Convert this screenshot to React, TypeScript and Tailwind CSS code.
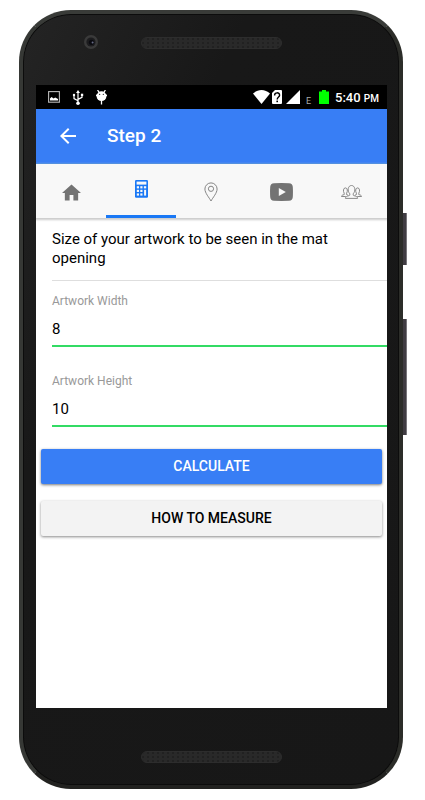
import { useState } from "react";

type IconProps = { className?: string };

const StatusIcons: React.FC = () => (
  <>
    <div className="flex items-center gap-3">
      <svg viewBox="0 0 12 12" className="h-3 w-3" aria-hidden="true">
        <rect x="0.6" y="0.6" width="10.8" height="10.6" fill="none" stroke="#b8b8b8" strokeWidth="1.1" />
        <path d="M2 9.6V7.6L3.6 6l2 1.6 1.6-1L10 8v1.6z" fill="#fff" />
      </svg>
      <svg viewBox="0 0 12 15" className="h-[15px] w-3" aria-hidden="true">
        <path d="M6 2.5V13M6 10.8L2 8.6V5M6 9.4l4-2V4.8" fill="none" stroke="#fff" strokeWidth="1.2" />
        <path d="M6 0l2 3H4z" fill="#fff" />
        <circle cx="6" cy="13.2" r="1.8" fill="#fff" />
        <circle cx="2" cy="5" r="1.2" fill="#fff" />
        <rect x="8.9" y="3.7" width="2.3" height="2.3" fill="#fff" />
      </svg>
      <svg viewBox="0 0 11 15" className="h-[15px] w-[11px]" aria-hidden="true">
        <path d="M1.6 0l1.8 3M9.4 0L7.600 3M5.500 10v4.500" stroke="#fff" strokeWidth="1.300" />
        <circle cx="5.500" cy="6.200" r="4.900" fill="#fff" />
        <path d="M0 4.600h11v1.400H0z" fill="#fff" />
        <circle cx="3.700" cy="4.300" r="0.600" />
        <circle cx="7.300" cy="4.300" r="0.600" />
      </svg>
    </div>
    <div className="ml-auto flex items-center">
      <svg viewBox="0 0 17 14" className="h-[14px] w-[17px]" aria-hidden="true">
        <path d="M0 3.6C5-1.1 12-1.1 17 3.6L8.5 14z" fill="#fff" />
      </svg>
      <svg viewBox="0 0 10 14" className="ml-[2px] h-[14px] w-[10px]" aria-hidden="true">
        <path d="M3 0h6a1 1 0 0 1 1 1v12a1 1 0 0 1-1 1H1a1 1 0 0 1-1-1V3z" fill="#fff" />
        <path d="M2.6 5.4C2.6 2 7.6 2 7.6 5.2 7.6 7 5.2 7 5.2 9.4" fill="none" stroke="#000" strokeWidth="1.4" />
        <rect x="4.4" y="10.6" width="1.6" height="1.6" />
      </svg>
      <svg viewBox="0 0 14 14" className="ml-1 h-[14px] w-[14px]" aria-hidden="true">
        <path d="M14 0v14H0z" fill="#fff" />
      </svg>
      <span className="ml-[6px] pt-2 text-[9px] leading-none text-[#aaaaaa]">E</span>
      <svg viewBox="0 0 10 14" className="ml-2 h-[14px] w-[10px]" aria-hidden="true">
        <path d="M3 0h4v1.5h3V14H0V1.5h3z" fill="#00ff00" />
      </svg>
      <span className="ml-[6px] text-[13px] leading-none font-medium text-white">
        5:40 <span className="text-[10px]">PM</span>
      </span>
    </div>
  </>
);

const BackIcon: React.FC<IconProps> = ({ className }) => (
  <svg viewBox="4 4 16 16" className={className} fill="currentColor" aria-hidden="true">
    <path d="M20 11H7.8l5.6-5.6L12 4l-8 8 8 8 1.4-1.4L7.8 13H20z" />
  </svg>
);

const HomeIcon: React.FC = () => (
  <svg viewBox="2 3 20 17" className="h-[17px] w-[19px]" fill="#737373" aria-hidden="true">
    <path d="M10 20v-6h4v6h5v-8h3L12 3 2 12h3v8z" />
  </svg>
);

const CalculatorIcon: React.FC = () => (
  <svg viewBox="0 0 13 18" className="h-[18px] w-[13px]" aria-hidden="true">
    <rect width="13" height="17.8" rx="1.2" fill="#1a78f5" />
    <g fill="#f8f8f8">
      <rect x="1.6" y="1.6" width="9.8" height="3" />
      <rect x="1.8" y="6.2" width="2.2" height="2.2" />
      <rect x="5.3" y="6.2" width="2.2" height="2.2" />
      <rect x="8.9" y="6.2" width="2.3" height="2.2" />
      <rect x="1.8" y="9.8" width="2.2" height="2.2" />
      <rect x="5.3" y="9.8" width="2.2" height="2.2" />
      <rect x="1.8" y="13.4" width="2.2" height="2.2" />
      <rect x="5.3" y="13.4" width="2.2" height="2.2" />
      <rect x="9.1" y="9.8" width="2" height="5.8" />
    </g>
  </svg>
);

const PinIcon: React.FC = () => (
  <svg viewBox="0 0 14 20" className="h-5 w-[14px]" fill="none" stroke="#858585" aria-hidden="true">
    <path d="M7 19C5.2 15.6.9 11 .9 7a6.1 6.1 0 0 1 12.2 0c0 4-4.3 8.6-6.1 12z" />
    <circle cx="7" cy="6.8" r="2.6" />
  </svg>
);

const VideoIcon: React.FC = () => (
  <svg viewBox="0 0 23 18" className="h-[18px] w-[23px]" aria-hidden="true">
    <path
      d="M4 .2Q11.5-.1 19 .2 22.600.4 22.800 4q.3 5 0 10-.2 3.600-3.800 3.800-7.500.3-15 0Q.4 17.600.2 14-.1 9 .2 4 .4.4 4 .2z"
      fill="#737373"
    />
    <path d="M8.8 4.9v8.200L15.800 9z" fill="#f8f8f8" />
  </svg>
);

const PeopleIcon: React.FC = () => (
  <svg viewBox="0 0 21 14" className="h-[14px] w-[21px]" fill="none" stroke="#7d7d7d" strokeWidth="0.9" aria-hidden="true">
    <path d="M4.400 13.400h12.200c-.1-1.800-1.500-2.200-3.900-2.800l-.5-.5V8.800c2.700-3 1.900-8.300-1.700-8.300S6.100 5.800 8.800 8.800v1.300l-.5.500c-2.400.6-3.800 1-3.900 2.800z" />
    <path d="M7 10.200l-1.400-.6V8.200c1.200-1.800 1.100-5.300-1.200-5.300S2 6.400 3.200 8.200v1.400C1.700 10 .6 10.200.5 11.500h4.300" />
    <path d="M14 10.200l1.400-.6V8.200c-1.200-1.800-1.100-5.300 1.200-5.300s2.400 3.500 1.200 5.300v1.400c1.500.4 2.600.6 2.700 1.900h-4.300" />
  </svg>
);

const tabs = [
  { name: "Home", Icon: HomeIcon },
  { name: "Calculator", Icon: CalculatorIcon },
  { name: "Locations", Icon: PinIcon },
  { name: "Videos", Icon: VideoIcon },
  { name: "Contacts", Icon: PeopleIcon },
];

// perforated pill used for both the earpiece and the bottom speaker
const Speaker: React.FC = () => (
  <svg viewBox="0 0 141 12" className="h-3 w-[141px]" aria-hidden="true">
    <defs>
      <pattern id="mesh" width="5" height="4" patternUnits="userSpaceOnUse">
        <rect width="5" height="4" fill="#292929" />
        <circle cx="2" cy="2" r="0.9" fill="#1d1d1d" />
      </pattern>
    </defs>
    <rect x="0.5" y="0.5" width="140" height="11" rx="5.5" fill="url(#mesh)" stroke="#2d2d2d" />
  </svg>
);

const App: React.FC = () => {
  const [activeTab, setActiveTab] = useState("Calculator");
  const [width, setWidth] = useState("8");
  const [height, setHeight] = useState("10");

  const fields = [
    { id: "artwork-width", label: "Artwork Width", value: width, onChange: setWidth },
    { id: "artwork-height", label: "Artwork Height", value: height, onChange: setHeight },
  ];

  return (
    <div className="flex min-h-screen flex-col bg-white pt-[10px] pr-[22px] pb-[11px] pl-[19px] font-['Roboto',sans-serif]">
      <div className="relative flex flex-1 flex-col rounded-[52px] border-4 border-t-[#393b38] border-r-[#2c2d29] border-b-[#222220] border-l-[#363835] bg-[#181818] bg-linear-to-br from-[#242424] via-[#181818] via-30% to-[#171717] pr-3 pl-[13px] shadow-[inset_0_0_0_1px_#0c0c0c]">
        <div className="absolute top-[199px] -right-2 h-[52px] w-1 border-r border-[#77757a] bg-[#403c42]" />
        <div className="absolute top-[305px] -right-2 h-[116px] w-1 border-r border-[#77757a] bg-[#403c42]" />

        <div className="relative flex h-[71px] items-center justify-center pb-[13px]">
          <Speaker />
          <svg viewBox="0 0 14 14" className="absolute top-[21px] left-12 h-[14px] w-[14px]" aria-hidden="true">
            <circle cx="7" cy="7" r="7" fill="#3a3a3a" />
            <circle cx="7" cy="7" r="4.6" fill="#1c1c1e" />
            <circle cx="7.5" cy="7.3" r="2.6" fill="#0a0a10" />
            <circle cx="8.6" cy="7.6" r="1" fill="#666b85" />
          </svg>
        </div>

        <div className="flex flex-1 flex-col overflow-hidden bg-white">
          <div className="flex h-6 items-center bg-black pr-2 pl-3">
            <StatusIcons />
          </div>

          <header className="flex h-[55px] items-center border-b border-[#1a73e8] bg-[#387ef5] pl-6 text-white">
            <button type="button" aria-label="Back">
              <BackIcon className="h-4 w-4" />
            </button>
            <h1 className="ml-[31px] text-[19px] leading-6 font-medium">Step 2</h1>
          </header>

          <nav className="grid h-[54px] shrink-0 grid-cols-5 bg-[#f8f8f8] shadow-[0_1px_2px_1px_#cccccc]">
            {tabs.map(({ name, Icon }) => (
              <button
                key={name}
                type="button"
                aria-label={name}
                onClick={() => setActiveTab(name)}
                className={`flex items-center justify-center border-[#1a78f5] ${
                  activeTab === name ? "border-b-3 pb-[2px]" : "pt-[2px]"
                }`}
              >
                <Icon />
              </button>
            ))}
          </nav>

          <form className="flex flex-col" onSubmit={(e) => e.preventDefault()}>
            <div className="pl-4">
              <p className="border-b border-[#dedede] pt-3 pr-4 pb-3 text-[15px] leading-[19px] text-black">
                Size of your artwork to be seen in the mat opening
              </p>
              {fields.map((field) => (
                <div key={field.id} className="mb-[14px] flex h-[66px] flex-col border-b-2 border-[#32db64] pt-3">
                  <label htmlFor={field.id} className="text-[12px] leading-4 text-[#999999]">
                    {field.label}
                  </label>
                  <input
                    id={field.id}
                    type="text"
                    inputMode="numeric"
                    value={field.value}
                    onChange={(e) => field.onChange(e.target.value)}
                    className="mt-2 h-6 w-full text-[15px] leading-6 text-black outline-none"
                  />
                </div>
              ))}
            </div>

            <div className="flex flex-col gap-[17px] px-[5px] pt-2">
              <button
                type="submit"
                className="h-[35px] rounded-[2px] bg-[#387ef5] pb-[2px] text-[14px] leading-4 font-medium text-white shadow-[0_1px_3px_#777777]"
              >
                CALCULATE
              </button>
              <button
                type="button"
                className="h-[35px] rounded-[2px] bg-[#f3f3f3] pb-[2px] text-[14px] leading-4 font-medium text-black shadow-[0_1px_3px_#888888]"
              >
                HOW TO MEASURE
              </button>
            </div>
          </form>
        </div>

        <div className="flex h-[77px] items-center justify-center pt-5">
          <Speaker />
        </div>
      </div>
    </div>
  );
};

export default App;
